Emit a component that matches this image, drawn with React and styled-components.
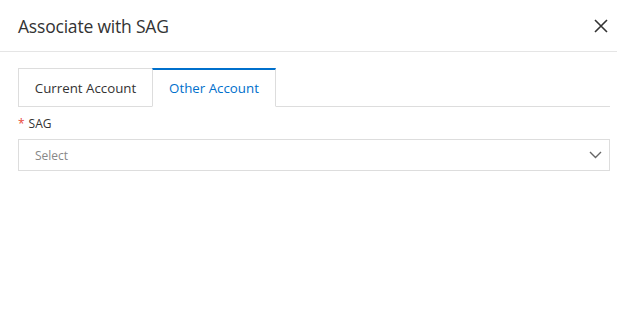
import React from 'react';
import styled, { createGlobalStyle } from 'styled-components';

const GlobalStyle = createGlobalStyle`
  html, body {
    margin: 0;
    padding: 0;
    background: #fff;
  }
  body {
    font-family: "Open Sans", "Noto Sans", "Liberation Sans", sans-serif;
    color: #333;
  }
`;

const Dialog = styled.div`
  width: 617px;
  height: 330px;
  background: #fff;
`;

const Header = styled.div`
  display: flex;
  align-items: center;
  justify-content: space-between;
  height: 52px;
  padding: 0 8px 0 18px;
  border-bottom: 1px solid #e5e5e5;
  box-sizing: border-box;
`;

const Title = styled.h2`
  margin: 0;
  font-size: 17.5px;
  font-weight: 400;
  color: #333;
  letter-spacing: -0.2px;
`;

const CloseButton = styled.button`
  display: flex;
  align-items: center;
  justify-content: center;
  width: 16px;
  height: 16px;
  padding: 0;
  border: 0;
  background: none;
  cursor: pointer;
  margin-top: 1px;
`;

const Body = styled.div`
  padding: 16px 7px 0 18px;
`;

const TabBar = styled.div`
  display: flex;
  height: 39px;
  border-bottom: 1px solid #ddd;
  box-sizing: border-box;
`;

const Tab = styled.div`
  display: flex;
  align-items: center;
  justify-content: center;
  flex: none;
  height: 39px;
  box-sizing: border-box;
  padding: 0;
  white-space: nowrap;
  font-size: 13.3px;
  color: ${p => (p.$active ? '#0070cc' : '#333')};
  background: #fff;
  border: 1px solid #ddd;
  border-top: ${p => (p.$active ? '2px solid #0070cc' : '1px solid #ddd')};
  border-bottom: ${p => (p.$active ? '1px solid #fff' : '1px solid #ddd')};
  margin-left: ${p => (p.$first ? '0' : '-1px')};
  width: ${p => p.$width}px;
  cursor: pointer;
`;

const Field = styled.div`
  margin-top: 9px;
`;

const Label = styled.label`
  display: flex;
  align-items: center;
  gap: 4px;
  font-size: 12px;
  color: #333;
  height: 14px;
`;

const Required = styled.span`
  color: #e84738;
`;

const SelectBox = styled.div`
  display: flex;
  align-items: center;
  justify-content: space-between;
  margin-top: 9px;
  height: 32px;
  box-sizing: border-box;
  border: 1px solid #ddd;
  padding: 0 7px 0 16px;
  font-size: 12px;
  color: #888;
  cursor: pointer;
`;

const X = () => (
  <svg width="14" height="14" viewBox="0 0 14 14">
    <path d="M1 1L13 13M13 1L1 13" stroke="#333" strokeWidth="1.6" fill="none" />
  </svg>
);

const Chevron = () => (
  <svg width="13" height="8" viewBox="0 0 13 8">
    <path d="M1 1L6.5 6.5L12 1" stroke="#666" strokeWidth="1.4" fill="none" />
  </svg>
);

export default function App() {
  return (
    <>
      <GlobalStyle />
      <Dialog>
        <Header>
          <Title>Associate with SAG</Title>
          <CloseButton aria-label="close">
            <X />
          </CloseButton>
        </Header>
        <Body>
          <TabBar>
            <Tab $first $width={135}>Current Account</Tab>
            <Tab $active $width={124}>Other Account</Tab>
          </TabBar>
          <Field>
            <Label>
              <Required>*</Required>SAG
            </Label>
            <SelectBox>
              <span>Select</span>
              <Chevron />
            </SelectBox>
          </Field>
        </Body>
      </Dialog>
    </>
  );
}
